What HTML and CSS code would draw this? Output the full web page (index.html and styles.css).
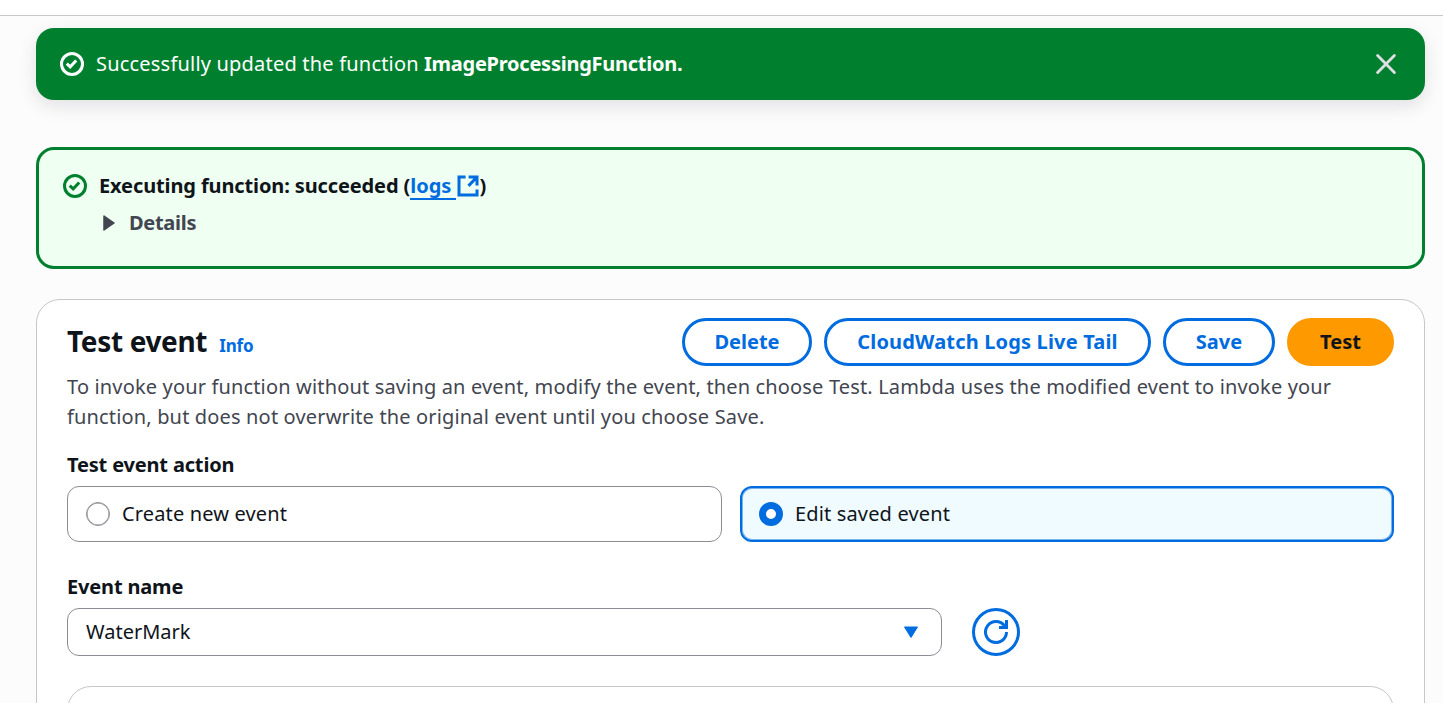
FILE: index.html
```html
<!DOCTYPE html>
<html lang="en">
<head>
<meta charset="utf-8">
<title>Lambda - Test event</title>
<link rel="stylesheet" href="styles.css">
</head>
<body>
<header class="topbar"></header>
<main class="content">
  <section class="flash">
    <svg class="icon" viewBox="0 0 16 16"><circle cx="8" cy="8" r="7"/><path d="m4.500 7.700 2.300 2.200 4-4.200"/></svg>
    <p class="flash-text"><span class="flash-msg">Successfully updated the function</span> <b class="flash-name">ImageProcessingFunction.</b></p>
    <svg class="icon close" viewBox="0 0 16 16"><path d="m2.4 2.4 11.2 11.2M13.6 2.4 2.4 13.6"/></svg>
  </section>
  <section class="alert">
    <svg class="icon" viewBox="0 0 16 16"><circle cx="8" cy="8" r="7"/><path d="m4.500 7.700 2.300 2.200 4-4.200"/></svg>
    <div class="alert-body">
      <div class="alert-title"><span class="alert-msg">Executing function: succeeded (</span><a class="logs">logs</a><svg class="icon external" viewBox="0 0 16 16"><path d="M6.4 2H2v12h12v-3.7M8.4 2H14v5.6M14 2 8.3 7.9"/></svg><span>)</span></div>
      <div class="details"><svg class="caret" viewBox="0 0 12 16"><path d="M1 1 11 8 1 15z"/></svg><span>Details</span></div>
    </div>
  </section>
  <section class="card">
    <div class="card-head">
      <h2>Test event</h2><a class="info">Info</a>
      <div class="actions">
        <button class="btn delete">Delete</button>
        <button class="btn tail">CloudWatch Logs Live Tail</button>
        <button class="btn save">Save</button>
        <button class="btn primary">Test</button>
      </div>
    </div>
    <p class="description">To invoke your function without saving an event, modify the event, then choose Test. Lambda uses the modified event to invoke your<br>function, but does not overwrite the original event until you choose Save.</p>
    <div class="label action-label">Test event action</div>
    <div class="tiles">
      <label class="tile"><span class="radio"></span>Create new event</label>
      <label class="tile selected"><span class="radio"></span>Edit saved event</label>
    </div>
    <div class="label name-label">Event name</div>
    <div class="select-row">
      <div class="select"><span>WaterMark</span><svg class="arrow" viewBox="0 0 16 13"><path d="M1.500 1h13L8 11.500z"/></svg></div>
      <button class="refresh" aria-label="Refresh"><svg class="icon" viewBox="0 0 16 16"><path d="M15 8a7 7 0 1 1-1.300-4.050M10 5h5V0"/></svg></button>
    </div>
    <div class="editor"></div>
  </section>
</main>
</body>
</html>
```
FILE: styles.css
```css
* { box-sizing: border-box; }
body { margin: 0; background: #fcfcfd; color: #0f141a; font: 20px/30px "Noto Sans", sans-serif; }
p, h2 { margin: 0; }
.topbar { height: 16px; background: #fff; border-bottom: 1px solid #c6c6cd; }
.content { height: 687px; overflow: hidden; padding: 12px 18px 0 36px; }
.icon { width: 24px; height: 24px; flex: none; fill: none; stroke: currentColor; stroke-width: 2; }
.flash { display: flex; align-items: center; height: 72px; padding: 0 27px 0 24px; border-radius: 18px; background: #00802f; color: #fff; box-shadow: 0 6px 18px 1px rgba(0, 7, 22, 0.1); }
.flash-text { flex: 1; margin-left: 12px; }
.flash-msg { letter-spacing: 0.2px; }
.flash-name { letter-spacing: -0.25px; }
.close { color: #dedee3; stroke-linecap: round; stroke-width: 1.9; }
.alert { display: flex; height: 122px; margin-top: 47px; padding: 21px 24px; border: 3px solid #00802f; border-radius: 18px; background: #effff1; }
.alert > .icon { margin-top: 3px; color: #00802f; }
.alert-body { margin-left: 12px; font-weight: 700; }
.alert-title { display: flex; }
.alert-msg { letter-spacing: -0.12px; }
.logs { color: #006ce0; border-bottom: 2px solid #006ce0; height: 29px; width: 46px; }
.external { color: #006ce0; margin: 2.5px 0 0 -0.7px; }
.details { display: flex; align-items: center; margin-top: 7px; color: #424650; letter-spacing: -0.3px; }
.caret { width: 12px; height: 16px; margin: 0 14px 0 4px; fill: currentColor; stroke: currentColor; stroke-width: 1.5; stroke-linejoin: round; }
.card { height: 450px; margin-top: 30px; padding: 18px 30px; border: 1px solid #c6c6cd; border-radius: 24px; background: #fff; }
.card-head { display: flex; height: 48px; align-items: baseline; }
h2 { font-size: 28px; line-height: 46px; letter-spacing: -0.35px; }
.info { margin-left: 12px; font-size: 17px; font-weight: 700; letter-spacing: -0.1px; color: #006ce0; }
.actions { display: flex; gap: 12px; margin-left: auto; align-self: stretch; }
.btn { height: 48px; padding: 0; border: 3px solid #006ce0; border-radius: 24px; background: #fff; color: #006ce0; font: 700 20px/30px "Noto Sans", sans-serif; }
.delete { width: 130px; }
.tail { width: 327px; letter-spacing: 0.17px; }
.save { width: 112px; }
.primary { width: 107px; background: #f90; border-color: #f90; color: #0f141a; }
.description { margin-top: 6px; color: #424650; letter-spacing: 0.156px; white-space: nowrap; }
.label { font-weight: 700; letter-spacing: -0.17px; }
.action-label { margin-top: 18px; }
.tiles { display: grid; grid-template-columns: 655px 654px; gap: 18px; margin-top: 6px; }
.tile { display: flex; align-items: center; height: 56px; padding: 0 18px; gap: 12px; border: 1px solid #8c8c94; border-radius: 12px; letter-spacing: 0.15px; }
.radio { width: 24px; height: 24px; border: 1.5px solid #8c8c94; border-radius: 50%; background: #fff; box-shadow: inset 0 0 0 0.5px #8c8c94; }
.selected { padding: 0 17px; border: 2px solid #006ce0; background: #f0fbff; box-shadow: inset 0 0 0 1px #78b3f0; }
.selected .radio { border: 7px solid #006ce0; box-shadow: none; }
.name-label { margin-top: 30px; }
.select-row { display: flex; gap: 30px; margin-top: 6px; }
.select { display: flex; align-items: center; justify-content: space-between; width: 875px; height: 48px; padding: 0 22px 0 18px; border: 1px solid #8c8c94; border-radius: 12px; }
.arrow { width: 16px; height: 13px; fill: #006ce0; stroke: #006ce0; stroke-linejoin: round; }
.refresh { display: grid; place-items: center; width: 48px; height: 48px; padding: 0; border: 3px solid #006ce0; border-radius: 50%; background: #fff; color: #006ce0; }
.editor { height: 100px; margin-top: 30px; border: 1px solid #c6c6cd; border-radius: 24px; }
```
